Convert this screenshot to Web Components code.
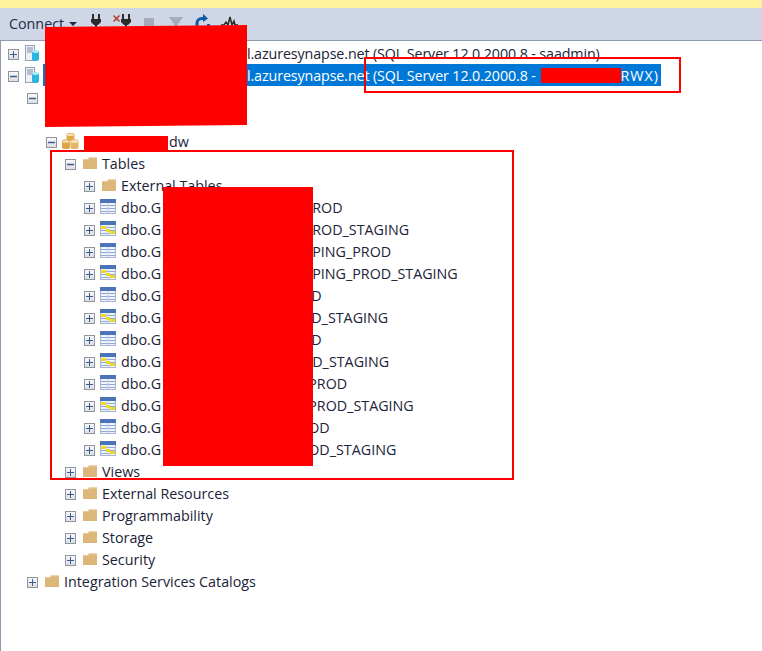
<!DOCTYPE html>
<html>
<head>
<meta charset="utf-8">
<title>Object Explorer</title>
<style>
  html, body { margin: 0; padding: 0; height: 100%; background: #fff; }
  body { font-family: "Open Sans", "Liberation Sans", sans-serif; overflow: hidden; }
</style>
</head>
<body>
<explorer-panel>
  <explorer-toolbar slot="toolbar"></explorer-toolbar>
  <tree-row level="0" state="plus" icon="server" style="letter-spacing:-.12px"><tree-gap w="202"></tree-gap>l.azuresynapse.net (SQL Server 12.0.2000.8 - saadmin)</tree-row>
  <tree-row level="0" state="minus" icon="server" selected style="letter-spacing:-.12px"><tree-gap w="202"></tree-gap>l.azuresynapse.net (SQL Server 12.0.2000.8 - <tree-gap w="81"></tree-gap><span style="letter-spacing:1px">RWX)</span></tree-row>
  <tree-row level="1" state="minus"></tree-row>
  <tree-row level="1"></tree-row>
  <tree-row level="2" state="minus" icon="db"><tree-gap w="86"></tree-gap>dw</tree-row>
  <tree-row level="3" state="minus" icon="folder">Tables</tree-row>
  <tree-row level="4" state="plus" icon="folder">External Tables</tree-row>
  <tree-row level="4" state="plus" icon="table">dbo.G<tree-gap w="151"></tree-gap>ROD</tree-row>
  <tree-row level="4" state="plus" icon="staging">dbo.G<tree-gap w="151"></tree-gap>ROD_STAGING</tree-row>
  <tree-row level="4" state="plus" icon="table">dbo.G<tree-gap w="151"></tree-gap>PING_PROD</tree-row>
  <tree-row level="4" state="plus" icon="staging">dbo.G<tree-gap w="151"></tree-gap>PING_PROD_STAGING</tree-row>
  <tree-row level="4" state="plus" icon="table">dbo.G<tree-gap w="150"></tree-gap>D</tree-row>
  <tree-row level="4" state="plus" icon="staging">dbo.G<tree-gap w="150"></tree-gap>D_STAGING</tree-row>
  <tree-row level="4" state="plus" icon="table">dbo.G<tree-gap w="150"></tree-gap>D</tree-row>
  <tree-row level="4" state="plus" icon="staging">dbo.G<tree-gap w="151"></tree-gap>D_STAGING</tree-row>
  <tree-row level="4" state="plus" icon="table">dbo.G<tree-gap w="147"></tree-gap>PROD</tree-row>
  <tree-row level="4" state="plus" icon="staging">dbo.G<tree-gap w="147"></tree-gap>PROD_STAGING</tree-row>
  <tree-row level="4" state="plus" icon="table">dbo.G<tree-gap w="147"></tree-gap>OD</tree-row>
  <tree-row level="4" state="plus" icon="staging">dbo.G<tree-gap w="147"></tree-gap>OD_STAGING</tree-row>
  <tree-row level="3" state="plus" icon="folder">Views</tree-row>
  <tree-row level="3" state="plus" icon="folder">External Resources</tree-row>
  <tree-row level="3" state="plus" icon="folder">Programmability</tree-row>
  <tree-row level="3" state="plus" icon="folder">Storage</tree-row>
  <tree-row level="3" state="plus" icon="folder">Security</tree-row>
  <tree-row level="1" state="plus" icon="folder">Integration Services Catalogs</tree-row>
</explorer-panel>

<script>
const TABLE_BASE = `<rect x="0.5" y="0.5" width="15" height="14" fill="#f1f3fa" stroke="#a5b5d8"/><rect x="0" y="0" width="16" height="4" fill="#4c74b9"/><path d="M1 6.500h14M1 9.500h14M1 12.500h14" stroke="#93a8d4"/><path d="M8 4v10" stroke="#c3cde6"/>`;
const ICONS = {
  folder: `<svg width="16" height="16" viewBox="0 0 16 16"><path d="M1 3h5l1-1.500h8V13H1z" fill="#dcb67a"/><path d="M1 3h5l1-1.500h8v1H7.500L6.500 4H1z" fill="#e7c995"/></svg>`,
  table: `<svg class="up" width="16" height="16" viewBox="0 0 16 16">${TABLE_BASE}</svg>`,
  staging: `<svg class="up" width="16" height="16" viewBox="0 0 16 16">${TABLE_BASE}<rect x="1" y="5" width="5" height="3" fill="#eeda1e"/><rect x="6" y="8" width="4" height="3" fill="#eeda1e"/><rect x="10" y="10" width="5" height="3" fill="#eeda1e"/></svg>`,
  server: `<svg width="16" height="18" viewBox="0 0 16 18"><rect x="0.5" y="0.5" width="9" height="15" fill="#eef1f6" stroke="#93a0b5"/><path d="M2 3h6M2 5h6M2 7h6" stroke="#7f8da3"/><ellipse cx="10.500" cy="6.500" rx="3.500" ry="1.500" fill="#a8e8f8"/><path d="M7 6.500V14.500c0 .8 1.500 1.500 3.500 1.500s3.500-.7 3.500-1.500V6.500c0 .8-1.500 1.500-3.500 1.500S7 7.300 7 6.500z" fill="#2cb5de"/></svg>`,
  db: `<svg class="left" width="17" height="18" viewBox="0 0 17 18"><rect x="4.500" y="0" width="8" height="8" rx="2" fill="#dfa94f"/><ellipse cx="8.500" cy="1.800" rx="3.600" ry="1.300" fill="#f6dfb2"/><rect x="0" y="6.500" width="8" height="9.500" rx="2" fill="#dda546"/><ellipse cx="4" cy="8.500" rx="3.600" ry="1.300" fill="#f6dfb2"/><rect x="8.500" y="6.500" width="8" height="9.500" rx="2" fill="#e4b566"/><ellipse cx="12.500" cy="8.500" rx="3.600" ry="1.300" fill="#f9e8c8"/></svg>`
};

customElements.define('explorer-panel', class ExplorerPanel extends HTMLElement {
  constructor() {
    super();
    this.attachShadow({mode: 'open'}).innerHTML = `
    <style>
      :host { display: block; position: relative; width: 762px; height: 651px; overflow: hidden; background: #fff; }
      .title { height: 8px; background: #fff29d; }
      .tools { height: 32px; background: #cfd6e5; border-bottom: 1px solid #8e9bb0; }
      .tree { padding-top: 2px; border-left: 1px solid #8e9bb0; height: 608px; }
      .mark { position: absolute; background: #f00; }
      .box { position: absolute; border: 2px solid #f00; box-sizing: border-box; }
    </style>
    <div class="title"></div>
    <div class="tools"><slot name="toolbar"></slot></div>
    <div class="tree"><slot></slot></div>
    <div class="mark" style="left:45px;top:25px;width:202px;height:102px;clip-path:polygon(0 2px,100% 0,100% 100px,0 100%)"></div>
    <div class="mark" style="left:163px;top:187px;width:150px;height:279px"></div>
    <div class="mark" style="left:84px;top:136px;width:84px;height:15px"></div>
    <div class="mark" style="left:541px;top:68px;width:80px;height:15px"></div>
    <div class="box" style="left:50px;top:150px;width:464px;height:330px"></div>
    <div class="box" style="left:364px;top:57px;width:317px;height:36px"></div>
    `
  }
});

customElements.define('explorer-toolbar', class ExplorerToolbar extends HTMLElement {
  constructor() {
    super();
    const plug = `<path d="M2 0v5M8 0v5" stroke="#2b2b2b" stroke-width="2"/><path d="M0 5h10v3L7 11H3L0 8z" fill="#2b2b2b"/><path d="M4 11h2v2H4z" fill="#2b2b2b"/>`;
    this.attachShadow({mode: 'open'}).innerHTML = `
    <style>
      :host { display: flex; align-items: flex-start; height: 32px; padding-left: 9px; font-size: 14.3px; color: #1e2a4a; }
      span.label { line-height: 32px; }
      .caret { width: 0; height: 0; margin: 14px 0 0 5px; border: 4px solid transparent; border-top: 4px solid #1e2a4a; border-bottom: 0; }
      svg { display: block; flex: none; }
    </style>
    <span class="label">Connect</span><span class="caret"></span>
    <svg style="margin:6px 0 0 14px" width="10" height="13" viewBox="0 0 10 13">${plug}</svg>
    <svg style="margin:6px 0 0 12px" width="18" height="13" viewBox="0 0 18 13"><path d="M0.500 1.500l6 6M6.500 1.500l-6 6" stroke="#b5382a" stroke-width="1.500"/><g transform="translate(8)">${plug}</g></svg>
    <svg style="margin:10px 0 0 13px" width="10" height="10" viewBox="0 0 10 10"><rect width="10" height="10" fill="#a5abb8"/></svg>
    <svg style="margin:9px 0 0 15px" width="14" height="10" viewBox="0 0 14 10"><path d="M0 0h14l-7 10z" fill="#a5abb8"/></svg>
    <svg style="margin:6px 0 0 12px" width="15" height="14" viewBox="0 0 15 14"><path d="M2 14V9c0-2.500 2-4.500 5-4.500h2" fill="none" stroke="#0e5ca8" stroke-width="3"/><path d="M8 0l5 4.500L8 8z" fill="#0e5ca8"/><path d="M12 10h3v3h-3z" fill="#0e5ca8"/></svg>
    <svg style="margin:8px 0 0 11px" width="17" height="12" viewBox="0 0 17 12"><path d="M0 9h3l2-3 2 3 2-8 2 8 2-4 1 4h3" fill="none" stroke="#2b2b2b" stroke-width="1.500"/></svg>
    `
  }
});

customElements.define('tree-gap', class TreeGap extends HTMLElement {
  constructor() {
    super();
    this.attachShadow({mode: 'open'}).innerHTML = `<style>:host { display: inline-block; }</style>`;
  }
  connectedCallback() {
    this.style.width = this.getAttribute('w') + 'px';
  }
});

customElements.define('tree-row', class TreeRow extends HTMLElement {
  constructor() {
    super();
    this.attachShadow({mode: 'open'});
  }
  connectedCallback() {
    const level = +this.getAttribute('level');
    const state = this.getAttribute('state');
    const icon = this.getAttribute('icon');
    const sign = state == 'plus' ? `<path d="M1 4.500h7M4.500 1v7" stroke="#3d5a96"/>` : `<path d="M1 4.500h7" stroke="#3d5a96" stroke-width="1.500"/>`;
    this.shadowRoot.innerHTML = `
    <style>
      :host { display: flex; align-items: center; height: 22px; padding-left: ${7 + level * 19}px; font-size: 14.3px; color: #1b2338; white-space: nowrap; }
      .exp { width: 9px; height: 9px; flex: none; margin-right: 6px; border: 1px solid #8f959e; background: linear-gradient(#f8f8f9, #dcdfe4); }
      .exp svg { display: block; }
      .icon { width: 16px; flex: none; margin-right: 2px; display: flex; align-items: center; }
      .icon svg { flex: none; }
      .icon .up { margin: 0 0 2px -1px; }
      .icon .left { margin-left: -1px; }
      .text { padding: 0 2px; line-height: 22px; }
      :host([selected]) .text { background: #0078d7; color: #fff; line-height: 20px; padding-top: 2px; margin-bottom: 2px; }
    </style>
    ${state ? `<span class="exp"><svg width="9" height="9" viewBox="0 0 9 9">${sign}</svg></span>` : ''}
    <span class="icon">${ICONS[icon] || ''}</span>
    <span class="text"><slot></slot></span>
    `
  }
});
</script>
</body>
</html>
